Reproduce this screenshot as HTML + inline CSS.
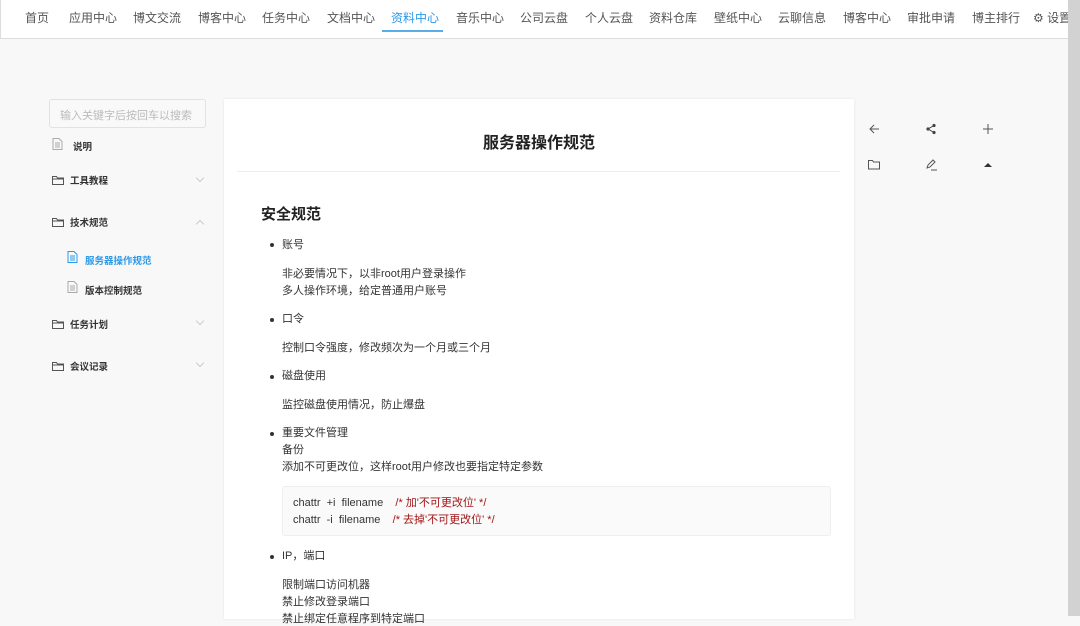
<!DOCTYPE html><html><head><meta charset="utf-8"><style>
*{margin:0;padding:0;box-sizing:border-box}
body{width:1080px;height:616px;overflow:hidden;background:#f8f8f8;font-family:"Liberation Sans","Noto Sans CJK SC",sans-serif;color:#333;position:relative}
.top{position:absolute;left:0;top:0;width:1068px;height:39px;background:#fff;border-bottom:1px solid #ddd;border-left:1px solid #ddd}
.top span{position:absolute;top:9px;font-size:12px;color:#555;white-space:nowrap}
.top .act{color:#2d9ae8}
.uline{position:absolute;left:381px;top:30px;width:61px;height:2px;background:#58aee8}
.sb{position:absolute;left:1068px;top:0;width:12px;height:616px;background:#d2d2d2}
.search{position:absolute;left:49px;top:99px;width:157px;height:29px;border:1px solid #e2e2e2;border-radius:3px;background:#f9f9f9;font-size:11px;color:#bbb;padding:7px 10px}
.nav{position:absolute;font-size:9.5px;color:#333;font-weight:bold}
.nav.s{color:#2d9ae8}
.ic{position:absolute}
.chev{position:absolute;left:197px;width:6px;height:6px;border-right:1px solid #ccc;border-bottom:1px solid #ccc}
.card{position:absolute;left:224px;top:99px;width:630px;height:520px;background:#fff;box-shadow:0 0 3px rgba(0,0,0,.08)}
.title{position:absolute;left:0;width:630px;top:129px;text-align:center;font-size:16px;font-weight:bold;color:#222}
.hr{position:absolute;left:237px;top:171px;width:603px;height:1px;background:#eee}
.t{position:absolute;font-size:11px;color:#333;white-space:nowrap}
.dot{position:absolute;left:270px;width:4px;height:4px;border-radius:2px;background:#333}
.code{position:absolute;left:282px;top:486px;width:549px;height:50px;background:#fafafa;border:1px solid #eee;border-radius:3px}
.r{color:#a31515}
</style></head><body>
<div class="top">
<span style="left:24px">首页</span><span style="left:68px">应用中心</span><span style="left:132px">博文交流</span><span style="left:197px">博客中心</span><span style="left:261px">任务中心</span><span style="left:326px">文档中心</span><span class="act" style="left:390px">资料中心</span><span style="left:455px">音乐中心</span><span style="left:519px">公司云盘</span><span style="left:584px">个人云盘</span><span style="left:648px">资料仓库</span><span style="left:713px">壁纸中心</span><span style="left:777px">云聊信息</span><span style="left:842px">博客中心</span><span style="left:906px">审批申请</span><span style="left:971px">博主排行</span><span style="left:1032px">⚙ 设置</span>
<div class="uline"></div>
</div>
<div class="sb"></div>
<div class="search">输入关键字后按回车以搜索</div>
<svg class="ic" style="left:52px;top:138px" width="11" height="12"><path d="M1 .5h6l3 3v8H1z M3 5h5M3 7h5M3 9h5" fill="none" stroke="#aaa"/></svg>
<div class="nav" style="left:73px;top:139px">说明</div>
<svg class="ic" style="left:52px;top:175px" width="12" height="10"><path d="M.5 1.5h4l1 1.5h6v6.5H.5z M.5 4h11" fill="none" stroke="#555"/></svg>
<div class="nav" style="left:70px;top:173px">工具教程</div><div class="chev" style="top:175px;transform:rotate(45deg)"></div>
<svg class="ic" style="left:52px;top:217px" width="12" height="10"><path d="M.5 1.5h4l1 1.5h6v6.5H.5z M.5 4h11" fill="none" stroke="#555"/></svg>
<div class="nav" style="left:70px;top:215px">技术规范</div><div class="chev" style="top:221px;transform:rotate(225deg)"></div>
<svg class="ic" style="left:67px;top:251px" width="11" height="12"><path d="M1 .5h6l3 3v8H1z M3 5h5M3 7h5M3 9h5" fill="none" stroke="#2d9ae8"/></svg>
<div class="nav s" style="left:85px;top:253px">服务器操作规范</div>
<svg class="ic" style="left:67px;top:281px" width="11" height="12"><path d="M1 .5h6l3 3v8H1z M3 5h5M3 7h5M3 9h5" fill="none" stroke="#aaa"/></svg>
<div class="nav" style="left:85px;top:283px">版本控制规范</div>
<svg class="ic" style="left:52px;top:319px" width="12" height="10"><path d="M.5 1.5h4l1 1.5h6v6.5H.5z M.5 4h11" fill="none" stroke="#555"/></svg>
<div class="nav" style="left:70px;top:317px">任务计划</div><div class="chev" style="top:318px;transform:rotate(45deg)"></div>
<svg class="ic" style="left:52px;top:361px" width="12" height="10"><path d="M.5 1.5h4l1 1.5h6v6.5H.5z M.5 4h11" fill="none" stroke="#555"/></svg>
<div class="nav" style="left:70px;top:359px">会议记录</div><div class="chev" style="top:360px;transform:rotate(45deg)"></div>
<div class="card"></div>
<div class="title" style="left:224px">服务器操作规范</div>
<div class="hr"></div>
<div class="t" style="left:261px;top:203px;font-size:15px;font-weight:bold;color:#222">安全规范</div>
<div class="dot" style="top:243px"></div><div class="t" style="left:282px;top:236px">账号</div>
<div class="t" style="left:282px;top:265px">非必要情况下，以非root用户登录操作</div>
<div class="t" style="left:282px;top:282px">多人操作环境，给定普通用户账号</div>
<div class="dot" style="top:318px"></div><div class="t" style="left:282px;top:310px">口令</div>
<div class="t" style="left:282px;top:339px">控制口令强度，修改频次为一个月或三个月</div>
<div class="dot" style="top:375px"></div><div class="t" style="left:282px;top:367px">磁盘使用</div>
<div class="t" style="left:282px;top:396px">监控磁盘使用情况，防止爆盘</div>
<div class="dot" style="top:432px"></div><div class="t" style="left:282px;top:424px">重要文件管理</div>
<div class="t" style="left:282px;top:441px">备份</div>
<div class="t" style="left:282px;top:458px">添加不可更改位，这样root用户修改也要指定特定参数</div>
<div class="code"></div>
<div class="t" style="left:293px;top:494px">chattr &nbsp;+i &nbsp;filename &nbsp;&nbsp;&nbsp;<span class="r">/* 加'不可更改位' */</span></div>
<div class="t" style="left:293px;top:511px">chattr &nbsp;-i &nbsp;filename &nbsp;&nbsp;&nbsp;<span class="r">/* 去掉'不可更改位' */</span></div>
<div class="dot" style="top:555px"></div><div class="t" style="left:282px;top:547px">IP，端口</div>
<div class="t" style="left:282px;top:576px">限制端口访问机器</div>
<div class="t" style="left:282px;top:593px">禁止修改登录端口</div>
<div class="t" style="left:282px;top:610px">禁止绑定任意程序到特定端口</div>
<svg class="ic" style="left:868px;top:123px" width="12" height="12"><path d="M11 6H2M6 2L2 6l4 4" fill="none" stroke="#555"/></svg>
<svg class="ic" style="left:925px;top:123px" width="12" height="12"><circle cx="9" cy="2.5" r="1.6" fill="#444"/><circle cx="3" cy="6" r="1.6" fill="#444"/><circle cx="9" cy="9.5" r="1.6" fill="#444"/><path d="M9 2.5L3 6l6 3.5" stroke="#444" fill="none"/></svg>
<svg class="ic" style="left:982px;top:123px" width="12" height="12"><path d="M6 1v10M1 6h10" stroke="#555"/></svg>
<svg class="ic" style="left:868px;top:159px" width="12" height="11"><path d="M.5 1.5h4l1 1.5h6v7H.5z" fill="none" stroke="#555"/></svg>
<svg class="ic" style="left:925px;top:158px" width="13" height="13"><path d="M2 10l1-3 5-5 2 2-5 5zM6 12h6" fill="none" stroke="#555"/></svg>
<svg class="ic" style="left:983px;top:161px" width="10" height="8"><path d="M1 6l4-4 4 4z" fill="#333"/></svg>
</body></html>
